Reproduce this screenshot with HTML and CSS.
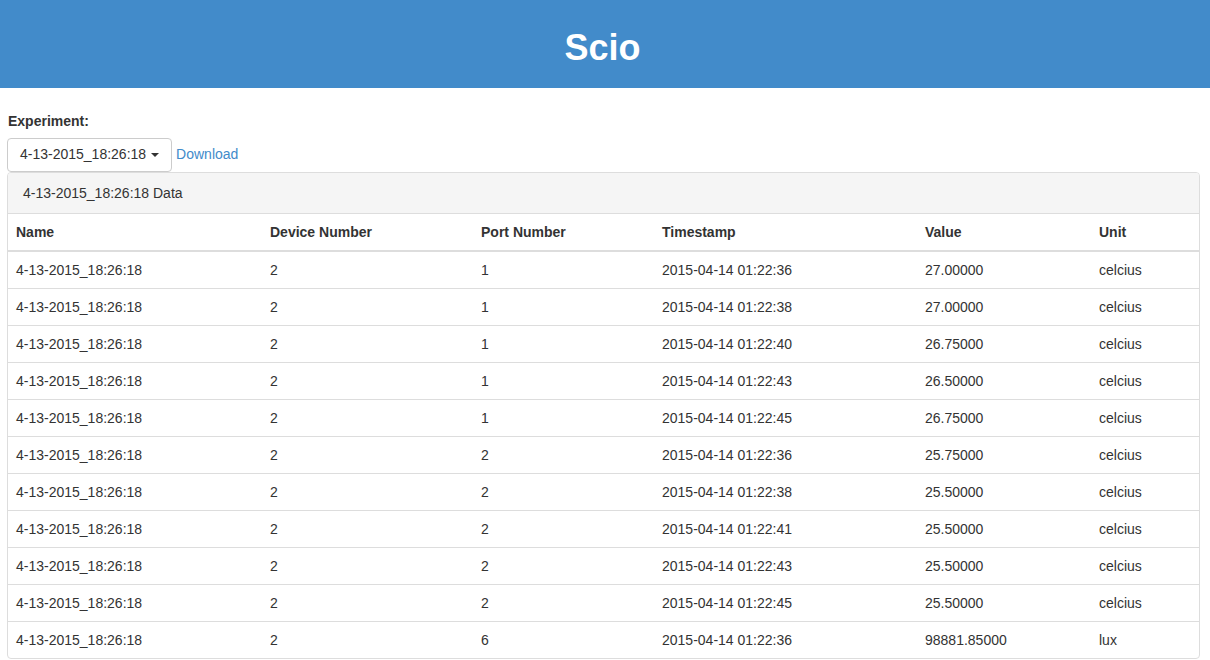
FILE: index.html
```html
<!DOCTYPE html>
<html>
<head>
<meta charset="utf-8">
<link rel="stylesheet" href="styles.css">
</head>
<body>
<header class="top">
  <h1 class="title">Scio</h1>
</header>
<main class="content">
  <label class="field-label">Experiment:</label>
  <div class="controls">
    <button class="btn">4-13-2015_18:26:18 <span class="caret"></span></button>
    <a class="link" href="#">Download</a>
  </div>
  <div class="panel">
    <div class="panel-heading">4-13-2015_18:26:18 Data</div>
    <table class="table">
      <colgroup>
        <col class="c1"><col class="c2"><col class="c3"><col class="c4"><col class="c5"><col class="c6">
      </colgroup>
      <thead>
        <tr><th>Name</th><th>Device Number</th><th>Port Number</th><th>Timestamp</th><th>Value</th><th>Unit</th></tr>
      </thead>
      <tbody>
        <tr><td>4-13-2015_18:26:18</td><td>2</td><td>1</td><td>2015-04-14 01:22:36</td><td>27.00000</td><td>celcius</td></tr>
        <tr><td>4-13-2015_18:26:18</td><td>2</td><td>1</td><td>2015-04-14 01:22:38</td><td>27.00000</td><td>celcius</td></tr>
        <tr><td>4-13-2015_18:26:18</td><td>2</td><td>1</td><td>2015-04-14 01:22:40</td><td>26.75000</td><td>celcius</td></tr>
        <tr><td>4-13-2015_18:26:18</td><td>2</td><td>1</td><td>2015-04-14 01:22:43</td><td>26.50000</td><td>celcius</td></tr>
        <tr><td>4-13-2015_18:26:18</td><td>2</td><td>1</td><td>2015-04-14 01:22:45</td><td>26.75000</td><td>celcius</td></tr>
        <tr><td>4-13-2015_18:26:18</td><td>2</td><td>2</td><td>2015-04-14 01:22:36</td><td>25.75000</td><td>celcius</td></tr>
        <tr><td>4-13-2015_18:26:18</td><td>2</td><td>2</td><td>2015-04-14 01:22:38</td><td>25.50000</td><td>celcius</td></tr>
        <tr><td>4-13-2015_18:26:18</td><td>2</td><td>2</td><td>2015-04-14 01:22:41</td><td>25.50000</td><td>celcius</td></tr>
        <tr><td>4-13-2015_18:26:18</td><td>2</td><td>2</td><td>2015-04-14 01:22:43</td><td>25.50000</td><td>celcius</td></tr>
        <tr><td>4-13-2015_18:26:18</td><td>2</td><td>2</td><td>2015-04-14 01:22:45</td><td>25.50000</td><td>celcius</td></tr>
        <tr><td>4-13-2015_18:26:18</td><td>2</td><td>6</td><td>2015-04-14 01:22:36</td><td>98881.85000</td><td>lux</td></tr>
      </tbody>
    </table>
  </div>
</main>
</body>
</html>
```

FILE: styles.css
```css
* { box-sizing: border-box; }
html, body {
  margin: 0;
  padding: 0;
  background: #fff;
  font-family: "Liberation Sans", Arial, Helvetica, sans-serif;
  font-size: 14px;
  line-height: 20px;
  color: #333;
}
.top {
  height: 88px;
  background: #428bca;
  display: flex;
  align-items: center;
  justify-content: center;
  padding-top: 8px;
  padding-right: 5px;
}
.title {
  margin: 0;
  color: #fff;
  font-size: 36px;
  line-height: 40px;
  font-weight: bold;
}
.content {
  padding: 23px 10px 0 7px;
}
.field-label {
  display: block;
  font-weight: bold;
  margin: 0 0 7px 1px;
}
.controls {
  display: flex;
  align-items: center;
  gap: 4px;
}
.btn {
  height: 34px;
  padding: 5px 12px 7px;
  font-family: inherit;
  font-size: 14px;
  line-height: 20px;
  color: #333;
  background: #fff;
  border: 1px solid #ccc;
  border-radius: 4px;
  display: flex;
  align-items: center;
  gap: 5px;
}
.caret {
  width: 0;
  height: 0;
  border-top: 4px solid #333;
  border-left: 4px solid transparent;
  border-right: 4px solid transparent;
  margin-top: 1px;
}
.link {
  color: #428bca;
  text-decoration: none;
  margin-top: -2px;
}
.panel {
  border: 1px solid #ddd;
  border-radius: 4px;
  overflow: hidden;
}
.panel-heading {
  background: #f5f5f5;
  padding: 10px 15px;
  border-bottom: 1px solid #ddd;
}
.table {
  width: 100%;
  border-collapse: collapse;
  table-layout: fixed;
}
.c1 { width: 254px; }
.c2 { width: 211px; }
.c3 { width: 181px; }
.c4 { width: 263px; }
.c5 { width: 174px; }
.c6 { width: auto; }
.table th, .table td {
  padding: 8px;
  text-align: left;
  vertical-align: top;
  white-space: nowrap;
}
.table th {
  font-weight: bold;
  border-bottom: 2px solid #ddd;
}
.table td {
  border-top: 1px solid #ddd;
}
.table tbody tr:first-child td {
  border-top: 0;
}
```
